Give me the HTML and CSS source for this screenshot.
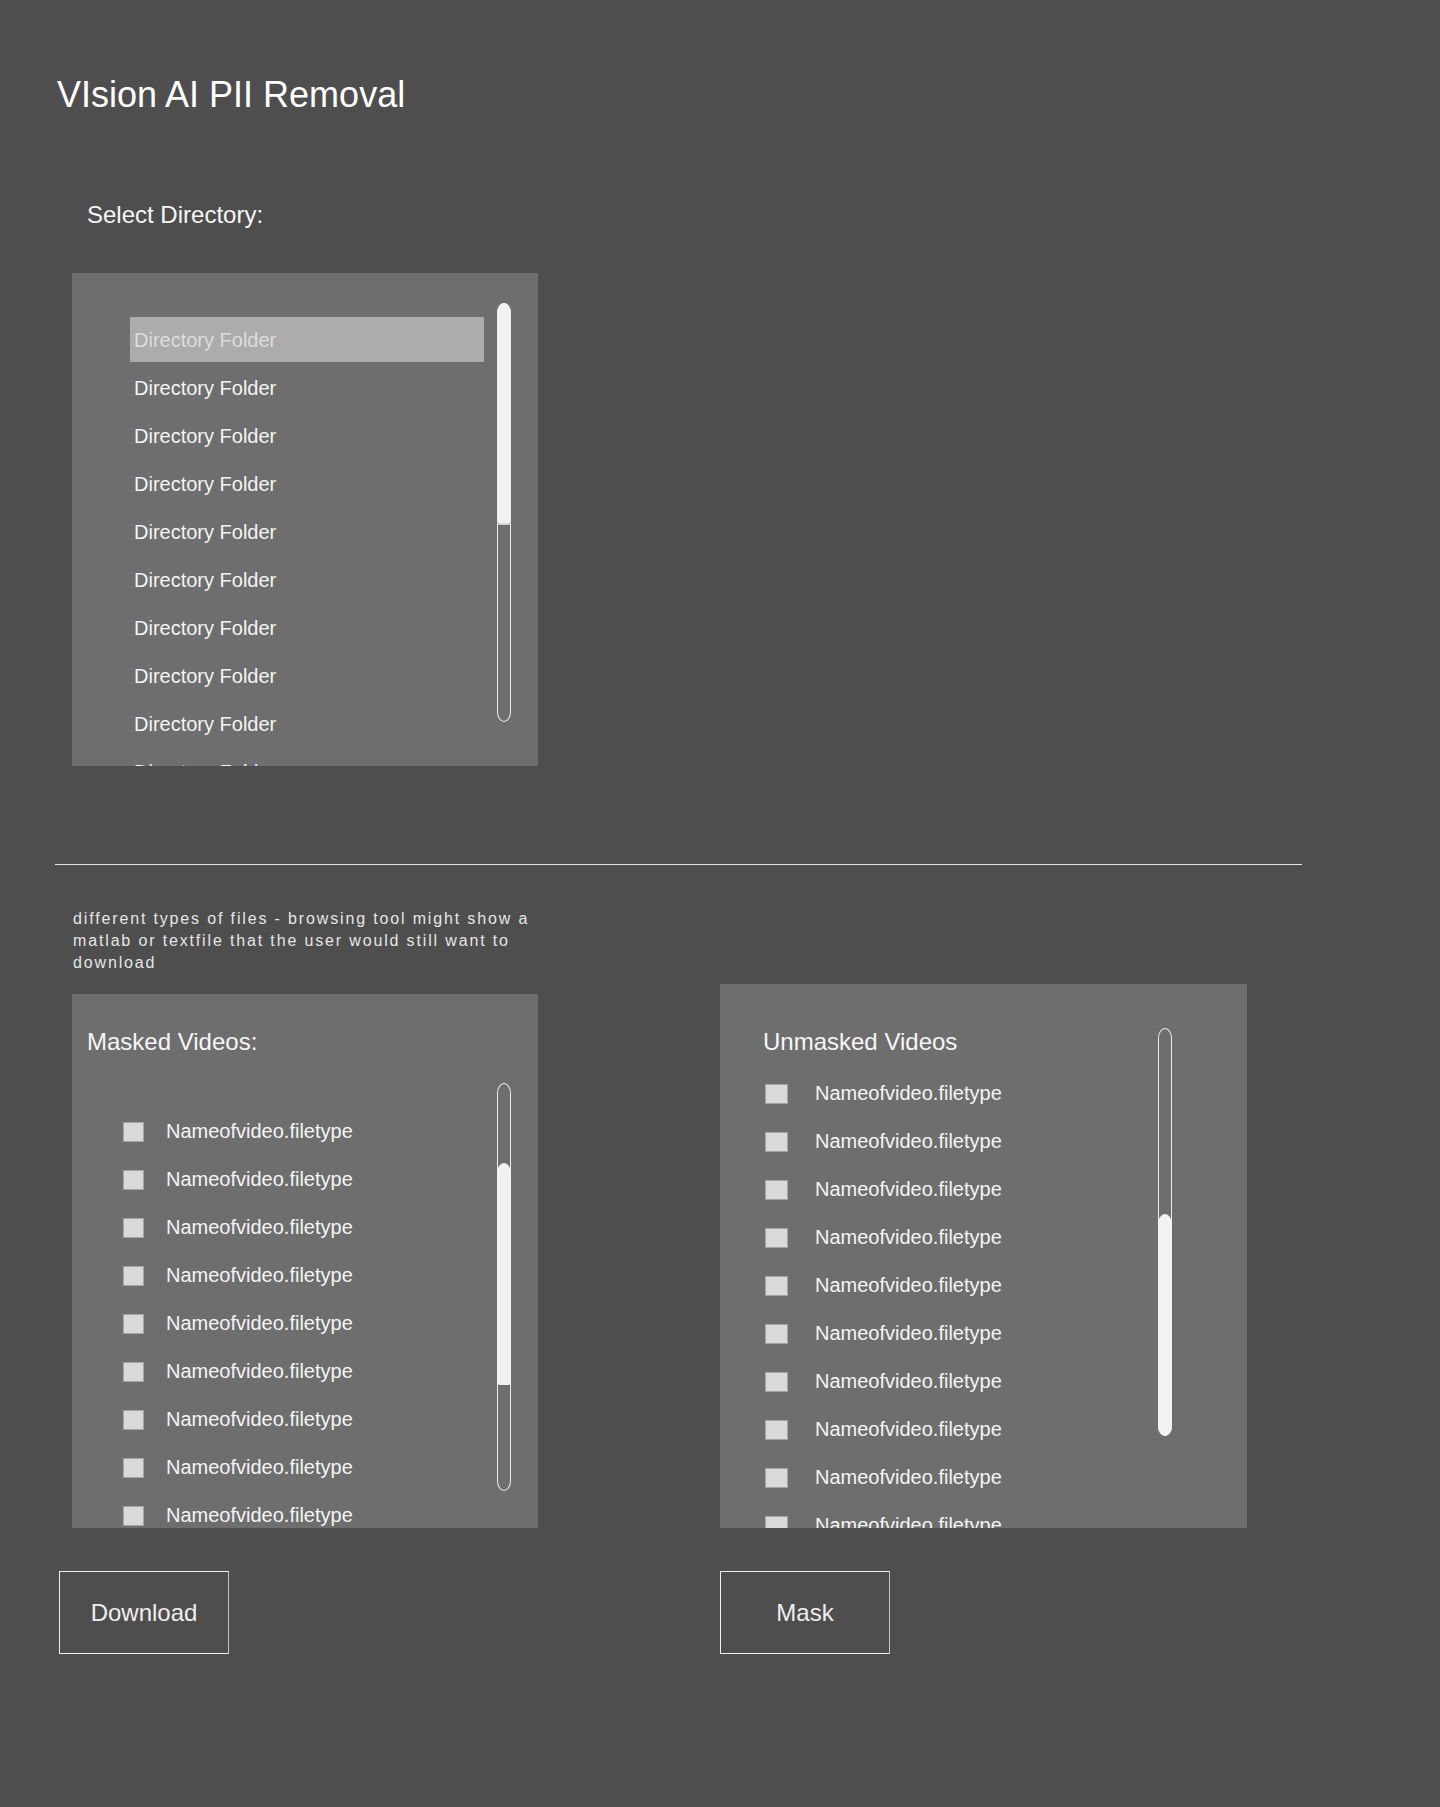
FILE: index.html
```html
<!DOCTYPE html>
<html lang="en">
<head>
<meta charset="utf-8">
<title>VIsion AI PII Removal</title>
<link rel="stylesheet" href="styles.css">
</head>
<body>
<div class="app">
  <h1 class="title">VIsion AI PII Removal</h1>

  <section class="dir-section">
    <h2 class="label">Select Directory:</h2>
    <div class="panel dir-panel">
      <ul class="dir-list">
        <li class="dir-item selected">Directory Folder</li>
        <li class="dir-item">Directory Folder</li>
        <li class="dir-item">Directory Folder</li>
        <li class="dir-item">Directory Folder</li>
        <li class="dir-item">Directory Folder</li>
        <li class="dir-item">Directory Folder</li>
        <li class="dir-item">Directory Folder</li>
        <li class="dir-item">Directory Folder</li>
        <li class="dir-item">Directory Folder</li>
        <li class="dir-item">Directory Folder</li>
      </ul>
      <div class="scroll dir-scroll"><div class="thumb dir-thumb"></div></div>
    </div>
  </section>

  <hr class="divider">

  <section class="videos">
    <div class="col-left">
      <p class="note">different types of files - browsing tool might show a matlab or textfile that the user would still want to download</p>
      <div class="panel masked-panel">
        <h2 class="panel-title masked-title">Masked Videos:</h2>
        <div class="masked-body">
          <ul class="file-list masked-list">
            <li class="file-row"><span class="check"></span><span class="fname">Nameofvideo.filetype</span></li>
            <li class="file-row"><span class="check"></span><span class="fname">Nameofvideo.filetype</span></li>
            <li class="file-row"><span class="check"></span><span class="fname">Nameofvideo.filetype</span></li>
            <li class="file-row"><span class="check"></span><span class="fname">Nameofvideo.filetype</span></li>
            <li class="file-row"><span class="check"></span><span class="fname">Nameofvideo.filetype</span></li>
            <li class="file-row"><span class="check"></span><span class="fname">Nameofvideo.filetype</span></li>
            <li class="file-row"><span class="check"></span><span class="fname">Nameofvideo.filetype</span></li>
            <li class="file-row"><span class="check"></span><span class="fname">Nameofvideo.filetype</span></li>
            <li class="file-row"><span class="check"></span><span class="fname">Nameofvideo.filetype</span></li>
            <li class="file-row"><span class="check"></span><span class="fname">Nameofvideo.filetype</span></li>
          </ul>
          <div class="scroll masked-scroll"><div class="thumb masked-thumb"></div></div>
        </div>
      </div>
    </div>

    <div class="panel unmasked-panel">
      <div class="unmasked-main">
        <h2 class="panel-title">Unmasked Videos</h2>
        <ul class="file-list unmasked-list">
          <li class="file-row"><span class="check"></span><span class="fname">Nameofvideo.filetype</span></li>
          <li class="file-row"><span class="check"></span><span class="fname">Nameofvideo.filetype</span></li>
          <li class="file-row"><span class="check"></span><span class="fname">Nameofvideo.filetype</span></li>
          <li class="file-row"><span class="check"></span><span class="fname">Nameofvideo.filetype</span></li>
          <li class="file-row"><span class="check"></span><span class="fname">Nameofvideo.filetype</span></li>
          <li class="file-row"><span class="check"></span><span class="fname">Nameofvideo.filetype</span></li>
          <li class="file-row"><span class="check"></span><span class="fname">Nameofvideo.filetype</span></li>
          <li class="file-row"><span class="check"></span><span class="fname">Nameofvideo.filetype</span></li>
          <li class="file-row"><span class="check"></span><span class="fname">Nameofvideo.filetype</span></li>
          <li class="file-row"><span class="check"></span><span class="fname">Nameofvideo.filetype</span></li>
        </ul>
      </div>
      <div class="scroll unmasked-scroll"><div class="thumb unmasked-thumb"></div></div>
    </div>
  </section>

  <div class="actions">
    <button class="btn" type="button">Download</button>
    <button class="btn" type="button">Mask</button>
  </div>
</div>
</body>
</html>
```

FILE: styles.css
```css
* { box-sizing: border-box; }

html, body {
  margin: 0;
  padding: 0;
  background: #4e4e4e;
}

body {
  font-family: "Liberation Sans", Arial, Helvetica, sans-serif;
  color: #f4f4f4;
  min-height: 1807px;
}

.app {
  padding-top: 74px;
}

.title {
  margin: 0 0 0 57px;
  font-size: 36px;
  line-height: 42px;
  font-weight: 400;
  color: #ffffff;
}

.dir-section {
  margin-top: 85px;
}

.label {
  margin: 0 0 0 87px;
  font-size: 24px;
  line-height: 28px;
  font-weight: 400;
  color: #f6f6f6;
}

.panel {
  background: #6e6e6e;
  overflow: hidden;
}

.dir-panel {
  margin: 44px 0 0 72px;
  width: 466px;
  height: 493px;
  display: flex;
  align-items: flex-start;
  padding: 30px 0 0 58px;
}

.dir-list {
  list-style: none;
  margin: 14px 0 0;
  padding: 0;
  width: 354px;
  flex: none;
  display: flex;
  flex-direction: column;
  gap: 3px;
}

.dir-item {
  height: 45px;
  padding: 2px 0 0 4px;
  line-height: 43px;
  font-size: 20px;
  white-space: nowrap;
  color: #f4f4f4;
}

.dir-item.selected {
  background: #acacac;
  color: #dcdcdc;
}

.scroll {
  flex: none;
  width: 14px;
  border: 1px solid #ececec;
  border-radius: 7px / 10px;
  display: flex;
  flex-direction: column;
}

.thumb {
  flex: none;
  height: 222px;
  margin: -1px -1px 0;
  background: #f2f2f2;
  border-radius: 7px 7px 3px 3px / 10px 10px 3px 3px;
}

.dir-scroll {
  margin-left: 13px;
  height: 419px;
}

.dir-thumb {
  box-shadow: inset 0 -2px 1px rgba(0, 0, 0, 0.12);
}

.divider {
  margin: 98px 0 0 55px;
  width: 1247px;
  height: 0;
  border: 0;
  border-top: 1px solid #e4e4e4;
}

.videos {
  display: flex;
  align-items: flex-end;
}

.col-left {
  margin-left: 72px;
  width: 466px;
  flex: none;
}

.note {
  margin: 43px 0 0 1px;
  width: 465px;
  font-size: 16px;
  line-height: 22px;
  letter-spacing: 1.85px;
  color: #e6e6e6;
}

.masked-panel {
  margin-top: 20px;
  width: 466px;
  height: 534px;
  padding-top: 34px;
}

.panel-title {
  margin: 0;
  font-size: 24px;
  line-height: 28px;
  font-weight: 400;
  color: #f6f6f6;
  white-space: nowrap;
}

.masked-title {
  margin-left: 15px;
}

.masked-body {
  display: flex;
  align-items: flex-start;
  margin-top: 27px;
}

.file-list {
  list-style: none;
  padding: 0;
}

.masked-list {
  margin: 24px 0 0 51px;
  width: 374px;
  flex: none;
}

.file-row {
  height: 48px;
  display: flex;
  align-items: center;
  font-size: 20px;
  line-height: 23px;
  white-space: nowrap;
  color: #f4f4f4;
}

.check {
  flex: none;
  width: 21px;
  height: 20px;
  margin-top: 2px;
  background: #d9d9d9;
  border: 1px solid #a4a4a4;
}

.masked-list .fname {
  margin-left: 22px;
}

.masked-scroll {
  height: 408px;
}

.masked-thumb {
  margin-top: 79px;
}

.unmasked-panel {
  margin-left: 182px;
  width: 527px;
  height: 544px;
  flex: none;
  display: flex;
  align-items: flex-start;
  padding: 44px 0 0 43px;
}

.unmasked-main {
  width: 395px;
  flex: none;
}

.unmasked-list {
  margin: 13px 0 0 2px;
}

.unmasked-list .check {
  width: 23px;
}

.unmasked-list .fname {
  margin-left: 27px;
}

.unmasked-scroll {
  height: 408px;
}

.unmasked-thumb {
  margin-top: auto;
  margin-bottom: -1px;
  border-radius: 7px / 10px;
}

.actions {
  display: flex;
  gap: 491px;
  margin: 43px 0 0 59px;
}

.btn {
  width: 170px;
  height: 83px;
  padding: 0;
  background: transparent;
  border: 1px solid #f0f0f0;
  border-right-color: #c6c6c6;
  color: #eeeeee;
  font-family: "Liberation Sans", Arial, Helvetica, sans-serif;
  font-size: 24px;
  display: flex;
  align-items: center;
  justify-content: center;
}
```
